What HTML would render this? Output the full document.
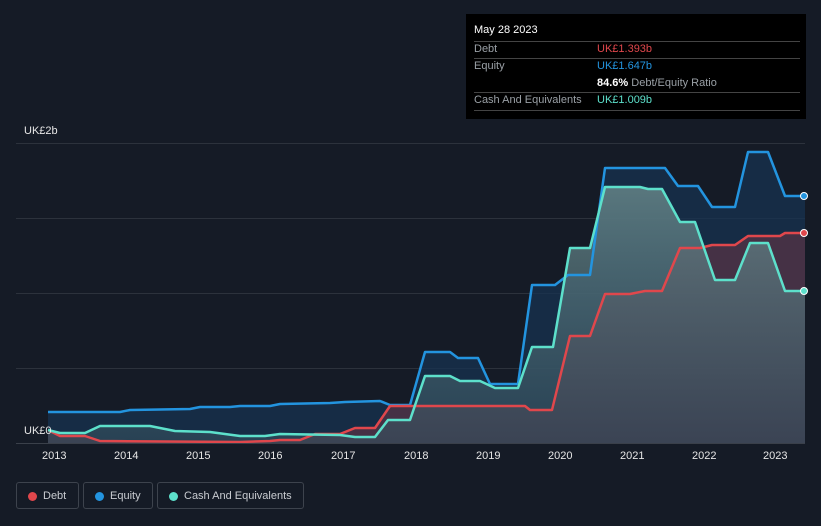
<!DOCTYPE html>
<html><head><meta charset="utf-8"><style>
body{margin:0;width:821px;height:526px;background:#151b26;font-family:"Liberation Sans",sans-serif;overflow:hidden;position:relative}
.tt{position:absolute;left:466px;top:14px;width:340px;height:105px;background:#000;color:#fff;font-size:11px}
.tt .r{position:absolute;left:8px;width:326px;border-top:1px solid #444}
.lbl{position:absolute;color:#9aa0a6;font-size:11px}
.ax{position:absolute;color:#e6e6e6;font-size:11px;top:450px}
.leg{position:absolute;top:482px;height:27px;border:1px solid #3d434d;border-radius:3px;color:#c9ccd1;font-size:11px;line-height:27px;box-sizing:border-box;padding-left:26px}
.leg i{position:absolute;left:11px;top:9px;width:9px;height:9px;border-radius:50%}
</style></head><body>
<svg width="821" height="526" style="position:absolute;left:0;top:0">
<defs>
<linearGradient id="c" x1="0" y1="0" x2="0" y2="1"><stop offset="0" stop-color="#6a8a8c" stop-opacity=".8"/><stop offset="1" stop-color="#34505e" stop-opacity=".6"/></linearGradient>
</defs>
<g stroke="#2c323c" stroke-width="1"><line x1="16" y1="143.5" x2="805" y2="143.5"/><line x1="16" y1="218.5" x2="805" y2="218.5"/><line x1="16" y1="293.5" x2="805" y2="293.5"/><line x1="16" y1="368.5" x2="805" y2="368.5"/></g>
<path d="M48 412 L120 412 130 410 190 409 200 407 230 407 240 406 270 406 280 404 330 403 345 402 380 401 390 405 410 405 425 352 450 352 458 358 478 358 490 384 518 384 532 285 555 285 568 275 590 275 605 168 665 168 678 186 698 186 712 207 735 207 748 152 768 152 785 196 805 196 L805 443 L48 443Z" fill="#173350" fill-opacity=".75"/>
<path d="M48 430 L60 436 85 436 100 441 240 442 270 441 280 440 300 440 315 434 340 434 355 428 375 428 390 406 525 406 530 410 552 410 570 336 590 336 605 294 630 294 645 291 662 291 680 248 700 248 712 245 735 245 748 236 780 236 785 233 805 233 L805 443 L48 443Z" fill="#5a3346" fill-opacity=".7"/>
<path d="M48 430 L60 433 85 433 100 426 150 426 175 431 210 432 240 436 265 436 280 434 340 435 355 437 375 437 388 420 410 420 425 376 450 376 460 381 480 381 495 388 518 388 532 347 553 347 570 248 590 248 605 187 640 187 648 189 662 189 680 222 695 222 715 280 735 280 750 243 768 243 785 291 805 291 L805 443 L48 443Z" fill="url(#c)"/>
<g fill="none" stroke-width="2.5" stroke-linejoin="round">
<path d="M48 412 L120 412 130 410 190 409 200 407 230 407 240 406 270 406 280 404 330 403 345 402 380 401 390 405 410 405 425 352 450 352 458 358 478 358 490 384 518 384 532 285 555 285 568 275 590 275 605 168 665 168 678 186 698 186 712 207 735 207 748 152 768 152 785 196 805 196" stroke="#2394df"/>
<path d="M48 430 L60 436 85 436 100 441 240 442 270 441 280 440 300 440 315 434 340 434 355 428 375 428 390 406 525 406 530 410 552 410 570 336 590 336 605 294 630 294 645 291 662 291 680 248 700 248 712 245 735 245 748 236 780 236 785 233 805 233" stroke="#e0474c"/>
<path d="M48 430 L60 433 85 433 100 426 150 426 175 431 210 432 240 436 265 436 280 434 340 435 355 437 375 437 388 420 410 420 425 376 450 376 460 381 480 381 495 388 518 388 532 347 553 347 570 248 590 248 605 187 640 187 648 189 662 189 680 222 695 222 715 280 735 280 750 243 768 243 785 291 805 291" stroke="#5de0cb"/>
</g>
<line x1="16" y1="443.5" x2="805" y2="443.5" stroke="#3a404a"/>
<circle cx="804" cy="196" r="3.5" fill="#2394df" stroke="#fff" stroke-width="1"/>
<circle cx="804" cy="233" r="3.5" fill="#e0474c" stroke="#fff" stroke-width="1"/>
<circle cx="804" cy="291" r="3.5" fill="#5de0cb" stroke="#fff" stroke-width="1"/>
</svg>
<div class="lbl" style="left:24px;top:125px;color:#e6e6e6">UK£2b</div>
<div class="lbl" style="left:24px;top:425px;color:#e6e6e6">UK£0</div>
<div class="ax" style="left:42px">2013</div><div class="ax" style="left:114px">2014</div><div class="ax" style="left:186px">2015</div><div class="ax" style="left:258px">2016</div><div class="ax" style="left:331px">2017</div><div class="ax" style="left:404px">2018</div><div class="ax" style="left:476px">2019</div><div class="ax" style="left:548px">2020</div><div class="ax" style="left:620px">2021</div><div class="ax" style="left:692px">2022</div><div class="ax" style="left:763px">2023</div>
<div class="tt">
<div style="position:absolute;left:8px;top:10px">May 28 2023</div>
<div class="r" style="top:27px"></div>
<div class="lbl" style="left:8px;top:29px">Debt</div><div style="position:absolute;left:131px;top:29px;color:#e0474c">UK£1.393b</div>
<div class="r" style="top:44px"></div>
<div class="lbl" style="left:8px;top:46px">Equity</div><div style="position:absolute;left:131px;top:46px;color:#2394df">UK£1.647b</div>
<div style="position:absolute;left:131px;top:63px"><b>84.6%</b> <span style="color:#9aa0a6">Debt/Equity Ratio</span></div>
<div class="r" style="top:78px"></div>
<div class="lbl" style="left:8px;top:80px">Cash And Equivalents</div><div style="position:absolute;left:131px;top:80px;color:#5de0cb">UK£1.009b</div>
<div class="r" style="top:96px"></div>
</div>
<div class="leg" style="left:16px;width:63px"><i style="background:#e0474c"></i>Debt</div>
<div class="leg" style="left:83px;width:70px"><i style="background:#2394df"></i>Equity</div>
<div class="leg" style="left:157px;width:147px"><i style="background:#5de0cb"></i>Cash And Equivalents</div>
</body></html>
